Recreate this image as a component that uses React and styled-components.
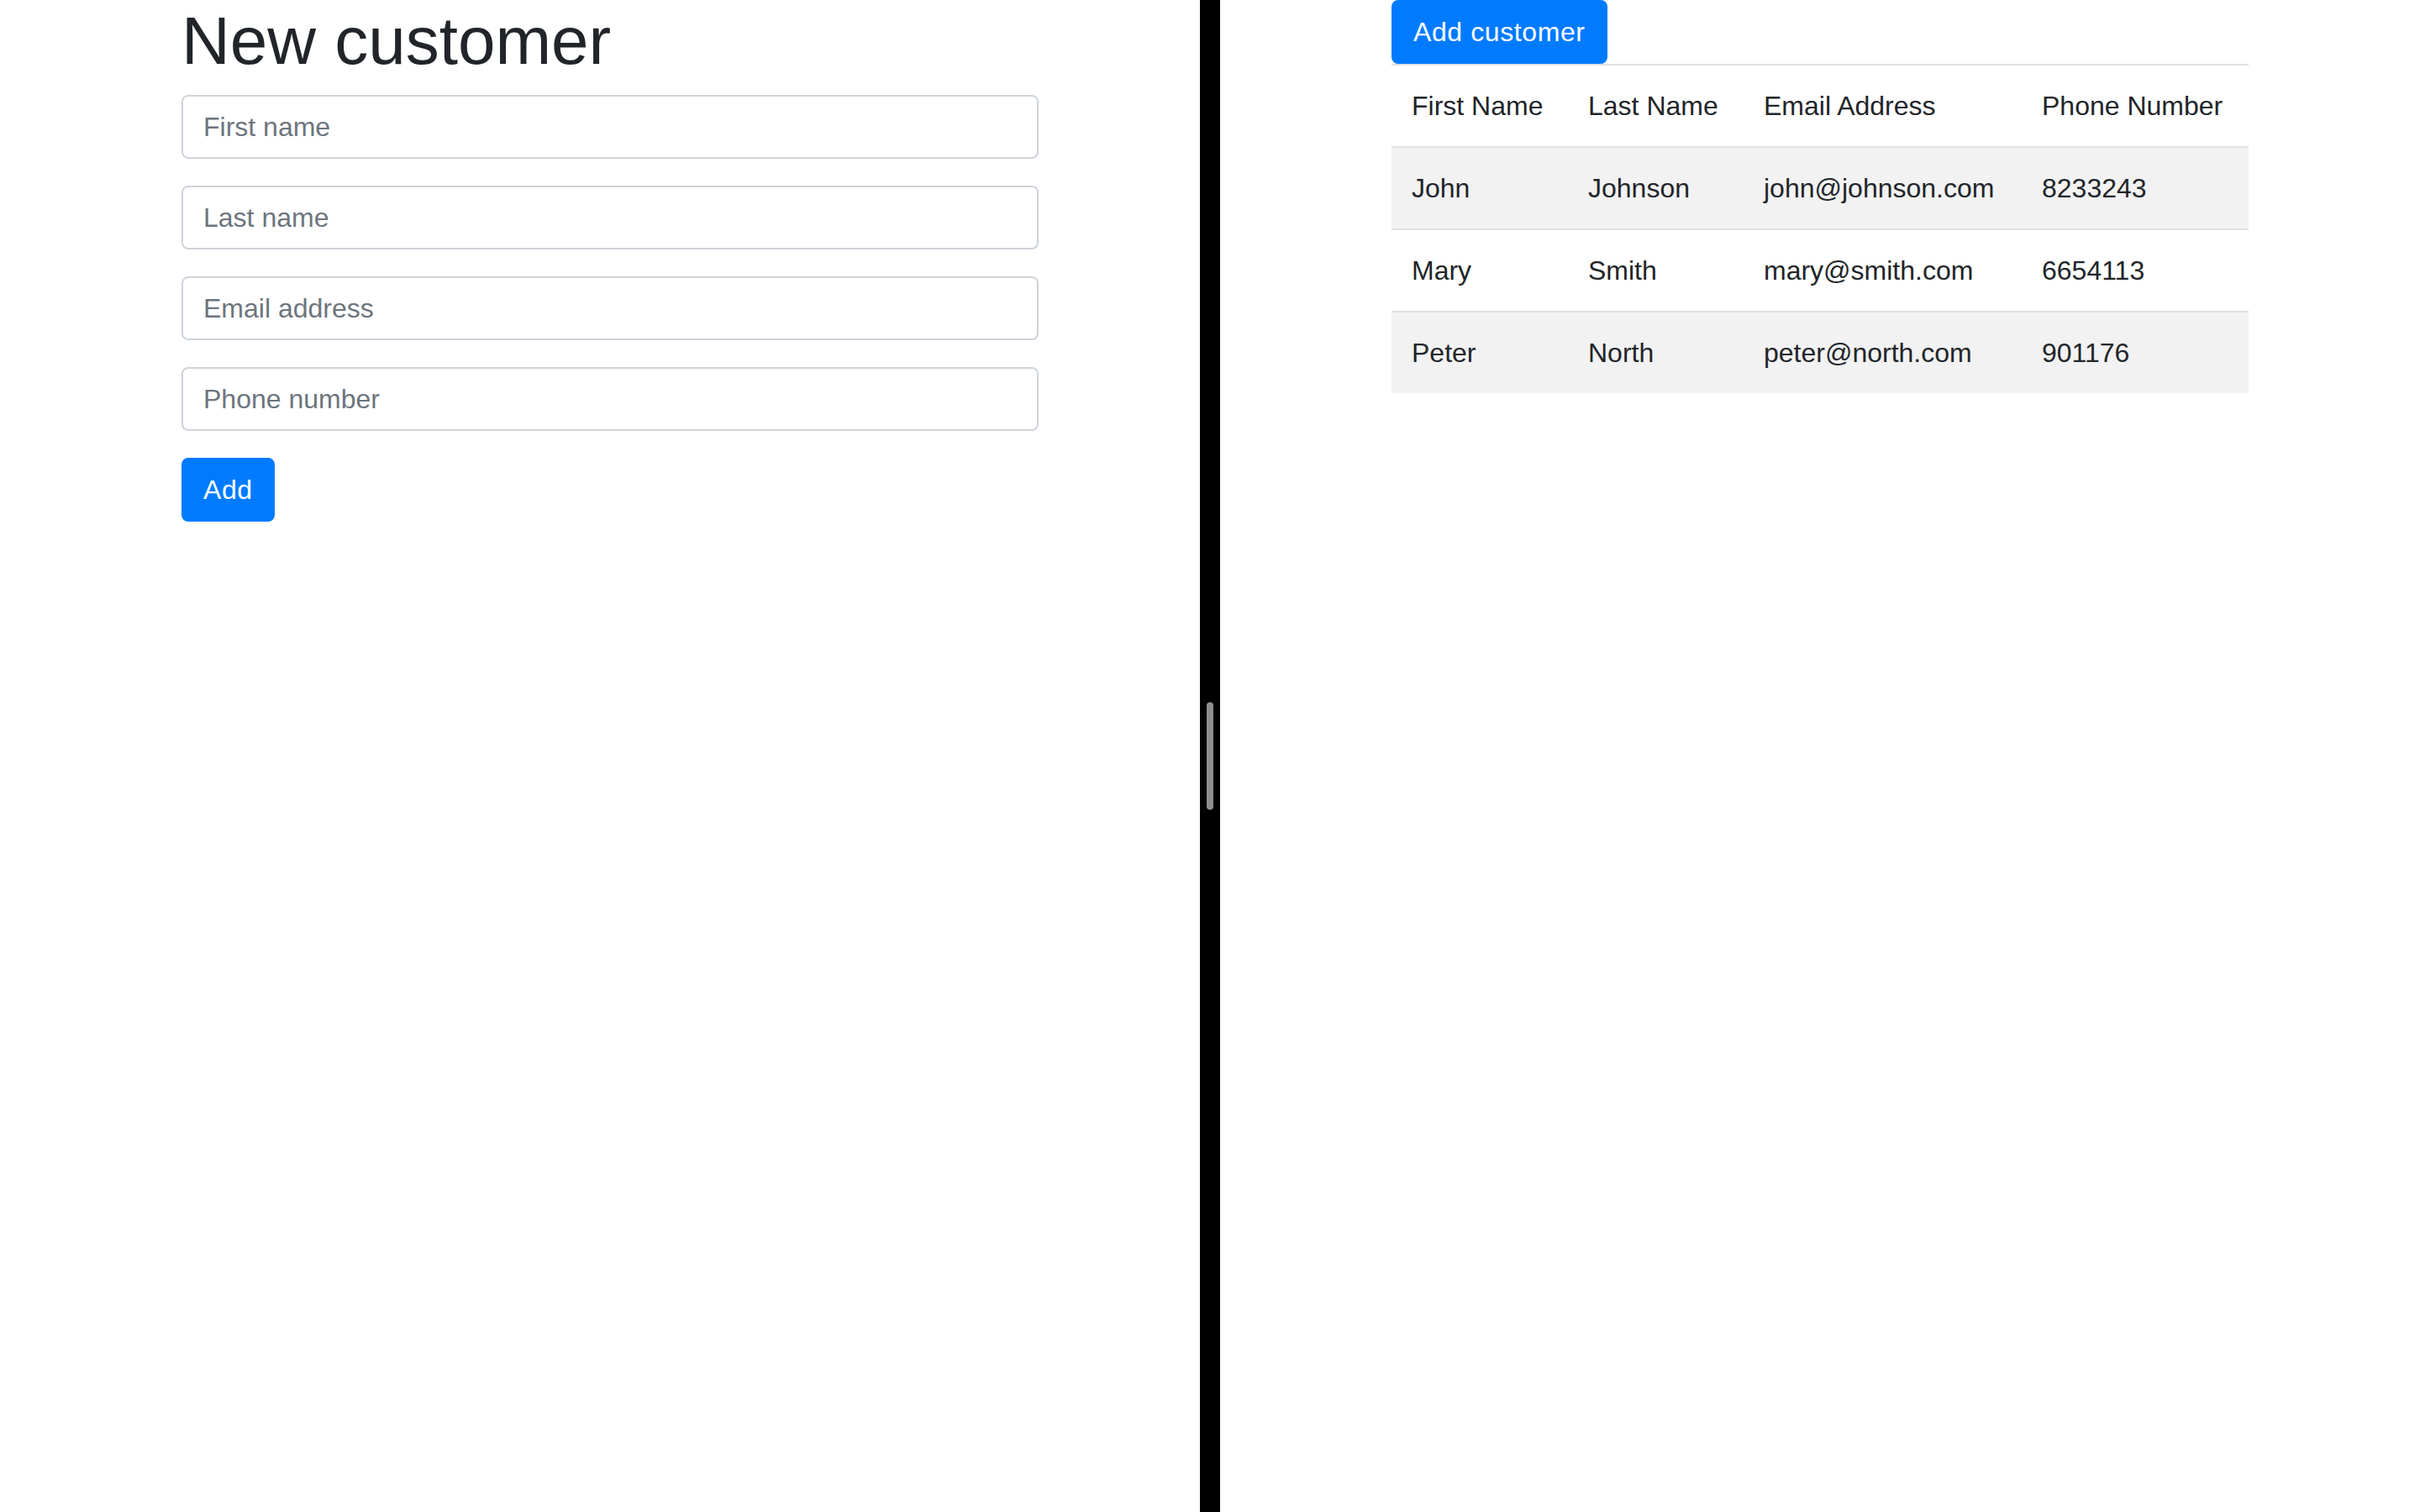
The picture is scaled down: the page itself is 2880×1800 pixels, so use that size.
import styled, { createGlobalStyle } from "styled-components";

const customers = [
  { first: "John", last: "Johnson", email: "john@johnson.com", phone: "8233243" },
  { first: "Mary", last: "Smith", email: "mary@smith.com", phone: "6654113" },
  { first: "Peter", last: "North", email: "peter@north.com", phone: "901176" },
];

const fields = ["First name", "Last name", "Email address", "Phone number"];

export default function App() {
  return (
    <>
      <GlobalStyle />
      <Styled.Layout>
        <Styled.LeftPane>
          <Styled.Container>
            <Styled.Title>New customer</Styled.Title>
            <form onSubmit={(e) => e.preventDefault()}>
              {fields.map((label) => (
                <Styled.FormGroup key={label}>
                  <Styled.Input type="text" placeholder={label} />
                </Styled.FormGroup>
              ))}
              <Styled.Button type="submit">Add</Styled.Button>
            </form>
          </Styled.Container>
        </Styled.LeftPane>

        <Styled.Divider>
          <Styled.Handle />
        </Styled.Divider>

        <Styled.RightPane>
          <Styled.Container>
            <Styled.Button type="button">Add customer</Styled.Button>
            <Styled.Table>
              <colgroup>
                <col style={{ width: "210px" }} />
                <col style={{ width: "209px" }} />
                <col style={{ width: "331px" }} />
                <col />
              </colgroup>
              <thead>
                <tr>
                  <Styled.Th>First Name</Styled.Th>
                  <Styled.Th>Last Name</Styled.Th>
                  <Styled.Th>Email Address</Styled.Th>
                  <Styled.Th>Phone Number</Styled.Th>
                </tr>
              </thead>
              <tbody>
                {customers.map((c, i) => (
                  <Styled.Row key={c.email} $striped={i % 2 === 0}>
                    <Styled.Td>{c.first}</Styled.Td>
                    <Styled.Td>{c.last}</Styled.Td>
                    <Styled.Td>{c.email}</Styled.Td>
                    <Styled.Td>{c.phone}</Styled.Td>
                  </Styled.Row>
                ))}
              </tbody>
            </Styled.Table>
          </Styled.Container>
        </Styled.RightPane>
      </Styled.Layout>
    </>
  );
}

const GlobalStyle = createGlobalStyle`
  html, body {
    margin: 0;
    padding: 0;
    background: #fff;
  }
  body {
    font-family: "Liberation Sans", Arial, sans-serif;
    font-size: 32px;
    line-height: 48px;
    color: #212529;
  }
  * {
    box-sizing: border-box;
  }
`;

const Styled = {
  Layout: styled.div`
    display: flex;
    width: 2880px;
    height: 1800px;
    overflow: hidden;
  `,

  LeftPane: styled.div`
    flex: 0 0 1428px;
    padding-left: 24px;
    display: flex;
    justify-content: center;
  `,

  RightPane: styled.div`
    flex: 1;
    display: flex;
    justify-content: center;
  `,

  Container: styled.div`
    width: 1020px;
  `,

  Divider: styled.div`
    flex: 0 0 24px;
    background: #000;
    display: flex;
    align-items: center;
    justify-content: center;
  `,

  Handle: styled.div`
    width: 8px;
    height: 128px;
    border-radius: 4px;
    background: #8e8e8e;
  `,

  Title: styled.h1`
    margin: 0 0 16px;
    padding-top: 1px;
    font-size: 80px;
    font-weight: 500;
    line-height: 1.2;
    color: #212529;
  `,

  FormGroup: styled.div`
    margin-bottom: 32px;
  `,

  Input: styled.input`
    display: block;
    width: 100%;
    height: 76px;
    padding: 12px 24px;
    font-family: inherit;
    font-size: 32px;
    line-height: 48px;
    color: #495057;
    background: #fff;
    border: 2px solid #ced4da;
    border-radius: 8px;
    outline: none;

    &::placeholder {
      color: #6c757d;
    }
  `,

  Button: styled.button`
    display: block;
    height: 76px;
    padding: 12px 24px;
    font-family: inherit;
    font-size: 32px;
    line-height: 48px;
    font-weight: 400;
    letter-spacing: 0.6px;
    color: #fff;
    background: #007bff;
    border: 2px solid #007bff;
    border-radius: 8px;
    cursor: pointer;
  `,

  Table: styled.table`
    width: 1020px;
    border-collapse: collapse;
    table-layout: fixed;
    color: #212529;
  `,

  Th: styled.th`
    padding: 24px;
    text-align: left;
    font-weight: 400;
    vertical-align: top;
    border-top: 2px solid #dee2e6;
    white-space: nowrap;
  `,

  Row: styled.tr`
    background: ${({ $striped }) => ($striped ? "#f2f2f2" : "transparent")};
  `,

  Td: styled.td`
    padding: 24px;
    vertical-align: top;
    border-top: 2px solid #dee2e6;
    white-space: nowrap;
  `,
};
